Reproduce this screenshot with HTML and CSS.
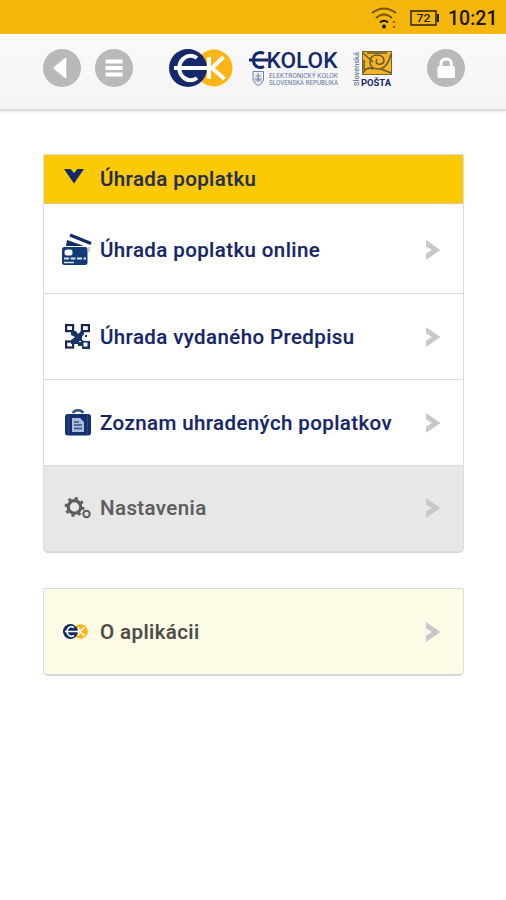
FILE: index.html
```
<!DOCTYPE html>
<html lang="sk">
<head>
<meta charset="utf-8">
<title>eKolok</title>
<link rel="stylesheet" href="styles.css">
</head>
<body>
<svg class="defs" width="0" height="0">
  <symbol id="chevron" viewBox="0 0 16 22"><path d="M1 1L15.500 11L1 21V14.500L7 11L1 7.500Z" fill="#c8c8c8"/></symbol>
  <symbol id="ek" viewBox="0 0 64 38">
    <circle cx="45" cy="19" r="18.500" fill="#fcb514"/>
    <circle cx="19" cy="19" r="19" fill="#14296b"/>
    <path d="M28 9C24 6 18 6 14 10C9 15 9 23 14 28C18 32 24 32 28 29M5 19H42" fill="none" stroke="#fff" stroke-width="4"/>
    <path d="M40 8V30M54.500 8L43 19L55.500 30" fill="none" stroke="#fff" stroke-width="4"/>
  </symbol>
</svg>
<div class="status">
  <svg class="wifi" width="26" height="22" viewBox="0 0 26 22" fill="none" stroke="#74550b" stroke-width="2">
    <path d="M1 6Q13-3 25 6M5 11Q13 4 21 11"/><path d="M9 15.500Q13 12 17 15.500" stroke="#161204"/>
    <circle cx="13" cy="19.500" r="2" fill="#161204" stroke="none"/><path d="M22 16l1-2 1 2M22 19l1 2 1-2" stroke-width="1"/>
  </svg>
  <svg class="battery" width="29" height="16" viewBox="0 0 29 16">
    <rect x="1" y="1" width="25" height="14" fill="none" stroke="#2a2106" stroke-width="1.500"/><path d="M27 4h2v8h-2z" fill="#2a2106"/>
    <text x="13.500" y="12" text-anchor="middle" font-size="11.500" font-weight="500" textLength="14" lengthAdjust="spacingAndGlyphs" fill="#2a2106">72</text>
  </svg>
  <span class="time">10:21</span>
</div>
<header class="header">
  <svg class="round" width="38" height="38" viewBox="0 0 38 38"><circle cx="19" cy="19" r="19" fill="#b9b9b9"/><path d="M11 19L22.500 9.500V28.500Z" fill="#fff" stroke="#fff" stroke-width="1.500" stroke-linejoin="round"/></svg>
  <svg class="round menu" width="38" height="38" viewBox="0 0 38 38"><circle cx="19" cy="19" r="19" fill="#b9b9b9"/><path d="M10.500 12.500H27.500M10.500 19H27.500M10.500 25.500H27.500" stroke="#fff" stroke-width="4"/></svg>
  <svg class="ek-logo" width="64" height="38"><use href="#ek"/></svg>
  <svg class="wordmark" width="90" height="38" viewBox="0 0 90 38" fill="#14296b">
    <path d="M15 4.500C11.500 2.500 4.500 3.500 4.500 11S11.500 19.500 15 17.500M0 11H19" fill="none" stroke="#14296b" stroke-width="3"/>
    <text x="17.500" y="18.800" font-size="22" font-weight="500" textLength="71" lengthAdjust="spacingAndGlyphs">KOLOK</text>
    <path d="M4 22.500H14.500V31Q13.500 35 9.200 36.500Q5 35 4 31Z" fill="#edf0f5" stroke="#7485aa"/><path d="M9.200 24V33M6.500 27H12M5.500 30H13M6 32.500Q9 29 12.500 32.500" fill="none" stroke="#7485aa"/>
    <text class="fine" x="20" y="28.800" font-size="6.500" textLength="69" lengthAdjust="spacingAndGlyphs">ELEKTRONICKÝ KOLOK</text>
    <text class="fine" x="20" y="36.400" font-size="6.500" textLength="69" lengthAdjust="spacingAndGlyphs">SLOVENSKÁ REPUBLIKA</text>
  </svg>
  <svg class="posta" width="41" height="36" viewBox="0 0 41 36">
    <text class="fine" transform="translate(6 35) rotate(-90)" font-size="7" font-weight="500" textLength="34" lengthAdjust="spacingAndGlyphs">Slovenská</text>
    <rect x="9.500" y=".5" width="29" height="23" fill="#f5b425" stroke="#79652f"/>
    <g fill="none" stroke="#655833" stroke-width="1.500"><path d="M10 2L20 11M38 3Q35 16 27 18Q17 19 17 10Q18 4 24 4Q31 4 31 10Q30 14 25 13Q22 12 24 8M10 22Q14 15 20 18M28 18L38 22M14 2H34M11 9V19"/></g>
    <text x="8" y="34.500" font-size="9.500" font-weight="700" fill="#14296b" textLength="30" lengthAdjust="spacingAndGlyphs">POŠTA</text>
  </svg>
  <svg class="round lock" width="38" height="38" viewBox="0 0 38 38"><circle cx="19" cy="19" r="19" fill="#b9b9b9"/><rect x="10.500" y="17" width="17.500" height="12" rx="1.500" fill="#fff"/><path d="M14 18V15Q14 10 19.200 10T24.400 15V18" fill="none" stroke="#fff" stroke-width="3"/></svg>
</header>
<main>
  <section class="card">
    <h1 class="title"><svg class="icon" width="27" height="28" viewBox="0 0 27 28"><path d="M1 4H7.500L11 8L14.500 4H21L11 18.500Z" fill="#14296b"/></svg>Úhrada poplatku</h1>
    <a class="row first">
      <svg class="icon" width="30" height="32" viewBox="0 0 30 32"><path d="M8 1L29 9.500" stroke="#122963" stroke-width="3"/><path d="M5 6L22 12H4Z" fill="#122963"/><path d="M27 13V18" stroke="#8b98b7"/><rect y="13" width="25.500" height="18" rx="2.500" fill="#123a76"/><rect x="2.500" y="15.500" width="8" height="6" rx="2.500" fill="#fff"/><path d="M2 24.500H24" stroke="#d8e1ee" stroke-width="2" stroke-dasharray="5 1.500"/><path d="M2 28.500H12" stroke="#d8e1ee" stroke-width="1.500"/></svg>
      <span>Úhrada poplatku online</span><svg class="chevron"><use href="#chevron"/></svg>
    </a>
    <a class="row">
      <svg class="icon qr" width="25" height="25" viewBox="0 0 25 25"><g fill="#fff" stroke="#1b2455" stroke-width="2.200"><rect x="1.100" y="1.100" width="7" height="6"/><rect x="16.900" y="1.100" width="7" height="6"/><rect x="1.100" y="17.500" width="7" height="6"/></g><path d="M6 7h5l2 3 3-3h3v3l-2 3v3l2 1h6v8h-8v-3h-4v-2H6v-4l4-3-4-2zM20 11h2v2h-2z" fill="#173466"/><path d="M18.500 18.500h4v4h-4zM14 17h2v1h-2z" fill="#fff"/></svg>
      <span>Úhrada vydaného Predpisu</span><svg class="chevron"><use href="#chevron"/></svg>
    </a>
    <a class="row">
      <svg class="icon bag" width="26" height="27" viewBox="0 0 26 27"><path d="M8 4Q9 1.300 13 1.300T18 4" fill="none" stroke="#324f83" stroke-width="2.500"/><rect y="5" width="26" height="21.500" rx="3" fill="#133170"/><path d="M3.500 6V26M22.500 6V26" stroke="#2a4a84"/><path d="M7 9H15L19 13V23H7Z" fill="#a9bdd8"/><path d="M9 13H14M9 16H17M9 19.500H17" stroke="#345383" stroke-width="1.500"/></svg>
      <span>Zoznam uhradených poplatkov</span><svg class="chevron"><use href="#chevron"/></svg>
    </a>
    <a class="row settings">
      <svg class="icon gear" width="27" height="24" viewBox="0 0 27 24" fill="none" stroke="#5b5b5b"><circle cx="9.500" cy="11" r="6.300" stroke-width="3.200"/><circle cx="9.500" cy="11" r="8.700" stroke-width="2.500" stroke-dasharray="3 3.833"/><circle cx="21.500" cy="18" r="3.200" stroke-width="2"/></svg>
      <span>Nastavenia</span><svg class="chevron"><use href="#chevron"/></svg>
    </a>
  </section>
  <section class="card about">
    <a class="row"><svg class="icon" width="25" height="15"><use href="#ek"/></svg><span>O aplikácii</span><svg class="chevron"><use href="#chevron"/></svg></a>
  </section>
</main>
</body>
</html>
```
FILE: styles.css
```
* { box-sizing: border-box; }
body { margin: 0; height: 900px; overflow: hidden; background: #fff; font-family: Roboto, sans-serif; }
.defs { display: block; }
svg { flex: none; overflow: visible; }
.status { height: 34px; background: #f4b60b; display: flex; align-items: center; padding: 2px 9px 0 371px; }
.battery { margin-left: 13px; }
.time { margin-left: 9px; padding-top: 1px; font-size: 19.5px; font-weight: 500; line-height: 33px; color: #1d1705; }
.header { height: 77px; padding: 15px 41px 0 43px; display: flex; align-items: flex-start; background: linear-gradient(#fafafa, #f4f4f4); border-bottom: 2px solid #dedede; box-shadow: 0 1px 2px #e8e8e8; }
.menu { margin-left: 14px; }
.ek-logo { margin-left: 36px; }
.wordmark { margin-left: 16px; }
.posta { margin: 2px 0 0 14px; }
.lock { margin-left: auto; }
.fine { fill: #63779f; }
main { padding: 43px 42px 0 43px; }
.card { border: 1px solid #dcdcdc; border-bottom: 2px solid #d8d8d8; border-radius: 2px 2px 5px 5px; overflow: hidden; }
.title, .row { display: flex; align-items: center; font-size: 20.5px; font-weight: 500; letter-spacing: .4px; margin: 0; color: #172668; white-space: nowrap; -webkit-text-stroke: .15px; }
.title { height: 49px; background: #fcca05; border-bottom: 1px solid #d9c885; padding-left: 19px; color: #252c50; }
.title .icon { margin-right: 10px; }
.row { height: 86px; border-top: 1px solid #dcdcdc; padding: 0 22px 0 18px; }
.row .icon { margin-right: 8px; }
.row .qr { margin: 0 10px 0 3px; }
.row .bag { margin: 0 9px 0 3px; }
.row .gear { margin: 0 8px 0 3px; }
.first { height: 89px; padding-top: 2px; border-top: 0; }
.chevron { width: 16px; height: 22px; margin-left: auto; }
.settings { background: #e7e7e7; color: #5d5d5d; padding-bottom: 1px; }
.about { margin-top: 35px; background: #fdfae5; }
.about .row { height: 85px; border: 0; color: #4c4b46; padding-left: 19px; }
.about .icon { margin-right: 12px; }
```
